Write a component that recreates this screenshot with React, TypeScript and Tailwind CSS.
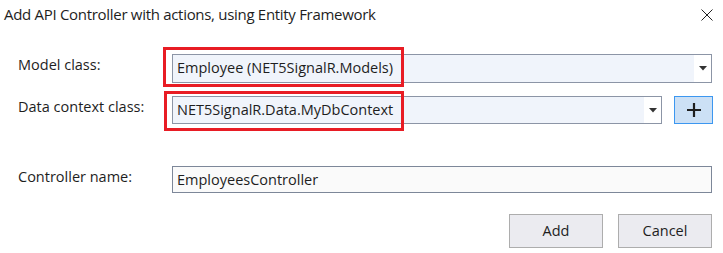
const font = { fontFamily: "'Open Sans', 'Noto Sans', sans-serif" };

const Arrow = () => (
  <svg width="8" height="5" viewBox="0 0 8 5">
    <path d="M0 0 H8 L4 4.5 Z" fill="#333" />
  </svg>
);

const Combo = ({ text, width, height }: { text: string; width: string; height: string }) => (
  <div className={`relative flex ${width} ${height} border border-[#8c95a6] bg-[#f0f4fb]`}>
    <div className="flex flex-1 items-center pl-[4px] text-[14.5px] leading-none text-[#1e1e1e]">{text}</div>
    <div className="flex w-[17px] items-center justify-center bg-white">
      <Arrow />
    </div>
  </div>
);

export default function App() {
  return (
    <div className="relative h-[253px] w-[723px] overflow-hidden bg-white text-[#1e1e1e]" style={font}>
      {/* Title bar */}
      <div className="flex h-[28px] items-center justify-between pl-[4px] pr-[10px] pt-[1px]">
        <div className="text-[15px] tracking-[-0.3px]">Add API Controller with actions, using Entity Framework</div>
        <svg width="12" height="12" viewBox="0 0 12 12">
          <path d="M0.5 0.5 L11.5 11.5 M11.5 0.5 L0.5 11.5" stroke="#222" strokeWidth="1" />
        </svg>
      </div>

      {/* Model class */}
      <div className="mt-[26px] flex items-center pl-[18px]">
        <div className="w-[154px] -translate-y-[4px] text-[14.5px]">Model class:</div>
        <div className="relative">
          <Combo text="Employee (NET5SignalR.Models)" width="w-[540px]" height="h-[29px]" />
          <div className="pointer-events-none absolute -left-[9px] -top-[7px] h-[40px] w-[241px] border-[3px] border-[#e81c24]" />
        </div>
      </div>

      {/* Data context class */}
      <div className="mt-[13px] flex items-center pl-[18px]">
        <div className="w-[154px] -translate-y-[3px] text-[14.5px]">Data context class:</div>
        <div className="relative">
          <Combo text="NET5SignalR.Data.MyDbContext" width="w-[490px]" height="h-[28px]" />
          <div className="pointer-events-none absolute -left-[8px] -top-[5px] h-[40px] w-[240px] border-[3px] border-[#e81c24]" />
        </div>
        <button className="ml-[12px] flex h-[28px] w-[39px] items-center justify-center border border-[#3c97f0] bg-[#cce0f5]">
          <svg width="14" height="14" viewBox="0 0 14 14">
            <path d="M7 0 V14 M0 7 H14" stroke="#1e1e1e" strokeWidth="2.2" />
          </svg>
        </button>
      </div>

      {/* Controller name */}
      <div className="mt-[42px] flex items-center pl-[18px]">
        <div className="w-[154px] -translate-y-[3px] text-[14.5px]">Controller name:</div>
        <div className="flex h-[27px] w-[540px] items-center border border-[#7d8799] bg-[#fafafa] pl-[4px] text-[14.5px]">
          EmployeesController
        </div>
      </div>

      {/* Buttons */}
      <div className="mt-[21px] flex justify-end gap-[15px] pr-[11px]">
        <button className="h-[34px] w-[94px] border border-[#adadad] bg-[#ebebf0] text-[14.5px]">Add</button>
        <button className="h-[34px] w-[94px] border border-[#adadad] bg-[#ebebf0] text-[14.5px]">Cancel</button>
      </div>
    </div>
  );
}
